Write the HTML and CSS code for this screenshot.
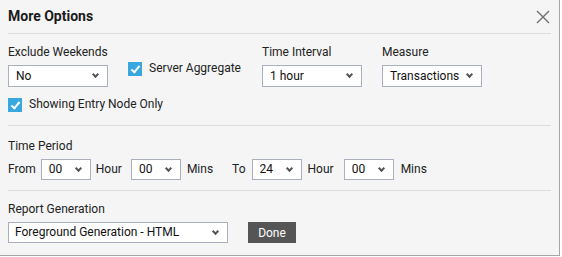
FILE: index.html
```html
<!DOCTYPE html>
<html lang="en">
  <head>
    <meta charset="UTF-8" />
    <title>More Options</title>
    <link rel="stylesheet" href="styles.css">
  </head>
  <body>
    <div class="dialog">
      <!-- Header -->
      <div class="dialog-header">
        <h1 class="dialog-title">More Options</h1>
        <svg class="close" width="14" height="14" viewBox="0 0 14 14">
          <path d="M1 1 L13 13 M13 1 L1 13" stroke="#707070" stroke-width="1.4" fill="none" />
        </svg>
      </div>

      <!-- Filters -->
      <div class="section section-filters">
        <div class="row">
          <div class="field">
            <div class="label">Exclude Weekends</div>
            <div class="select w100">No<span class="chev"></span></div>
          </div>
          <label class="check check-aggregate">
            <span class="box"></span>Server Aggregate
          </label>
          <div class="field field-interval">
            <div class="label">Time Interval</div>
            <div class="select w100">1 hour<span class="chev"></span></div>
          </div>
          <div class="field field-measure">
            <div class="label">Measure</div>
            <div class="select w100">Transactions<span class="chev"></span></div>
          </div>
        </div>
        <label class="check check-entry">
          <span class="box"></span>Showing Entry Node Only
        </label>
      </div>

      <!-- Time Period -->
      <div class="section section-period">
        <div class="label">Time Period</div>
        <div class="time-row">
          <span class="word word-first">From</span>
          <div class="select w50">00<span class="chev"></span></div>
          <span class="word word-hour">Hour</span>
          <div class="select w50">00<span class="chev"></span></div>
          <span class="word word-gap">Mins</span>
          <span class="word">To</span>
          <div class="select w50">24<span class="chev"></span></div>
          <span class="word word-hour2">Hour</span>
          <div class="select w50">00<span class="chev"></span></div>
          <span class="word word-last">Mins</span>
        </div>
      </div>

      <!-- Report -->
      <div class="section section-report">
        <div class="label">Report Generation</div>
        <div class="report-row">
          <div class="select w220">Foreground Generation - HTML<span class="chev"></span></div>
          <button class="done">Done</button>
        </div>
      </div>
    </div>
  </body>
</html>
```

FILE: styles.css
```css
* {
  box-sizing: border-box;
}
html,
body {
  margin: 0;
  padding: 0;
  background: #ffffff;
  font-family: Roboto, "Liberation Sans", sans-serif;
  font-size: 12px;
  line-height: 15px;
  color: #222;
}
.dialog {
  width: 560px;
  height: 256px;
  padding: 0 8px;
  background: #f5f5f5;
  border-right: 1px solid #a6a6a6;
  border-bottom: 1px solid #a6a6a6;
}
.dialog-header {
  height: 34px;
  padding-top: 8px;
  border-bottom: 1px solid #dcdcdc;
  display: flex;
  justify-content: space-between;
  align-items: flex-start;
}
.dialog-title {
  margin: 0;
  font-size: 14px;
  line-height: 17px;
  font-weight: bold;
  color: #1a1a1a;
}
.close {
  margin: 2px 1px 0 0;
}
.section {
  border-bottom: 1px solid #dcdcdc;
}
.section-filters {
  height: 92px;
  padding-top: 11px;
}
.section-period {
  height: 65px;
  padding-top: 13px;
}
.section-report {
  border-bottom: none;
  padding-top: 11px;
}
.row {
  display: flex;
  align-items: flex-start;
}
.field {
  display: flex;
  flex-direction: column;
}
.label {
  margin-bottom: 5px;
}
.field-interval {
  margin-left: 20px;
}
.field-measure {
  margin-left: 20px;
}
.select {
  position: relative;
  height: 22px;
  padding: 0 0 0 7px;
  background: #ffffff;
  border: 1px solid #a9afbd;
  display: flex;
  align-items: center;
  color: #111;
  white-space: nowrap;
}
.w100 {
  width: 100px;
}
.w50 {
  width: 50px;
  height: 21px;
}
.w220 {
  width: 220px;
  height: 21px;
  padding-left: 6px;
}
.chev {
  position: absolute;
  right: 9px;
  top: 50%;
  width: 5px;
  height: 5px;
  margin-top: -4px;
  border-right: 2px solid #555;
  border-bottom: 2px solid #555;
  transform: rotate(45deg);
}
.check {
  display: flex;
  align-items: center;
  white-space: nowrap;
}
.box {
  position: relative;
  width: 14px;
  height: 14px;
  margin-right: 7px;
  background: #37a7dd;
}
.box::after {
  content: "";
  position: absolute;
  left: 5px;
  top: 2px;
  width: 3px;
  height: 7px;
  border-right: 2px solid #fff;
  border-bottom: 2px solid #fff;
  transform: rotate(40deg);
}
.check-aggregate {
  margin: 16px 0 0 20px;
  width: 114px;
}
.check-entry {
  margin-top: 10px;
}
.time-row {
  display: flex;
  align-items: center;
  margin-top: 4px;
}
.word {
  margin: 0 6px;
}
.word-first {
  margin: 0 5px 0 0;
}
.word-hour {
  margin: 0 9px 0 5px;
}
.word-hour2 {
  margin: 0 10px 0 6px;
}
.word-gap {
  margin-right: 13px;
}
.word-last {
  margin-left: 7px;
}
.report-row {
  display: flex;
  align-items: center;
  margin-top: 5px;
}
.done {
  margin-left: 20px;
  width: 48px;
  height: 21px;
  border: none;
  padding: 0;
  background: #555;
  color: #fff;
  font-family: Roboto, "Liberation Sans", sans-serif;
  font-size: 12px;
}
```
